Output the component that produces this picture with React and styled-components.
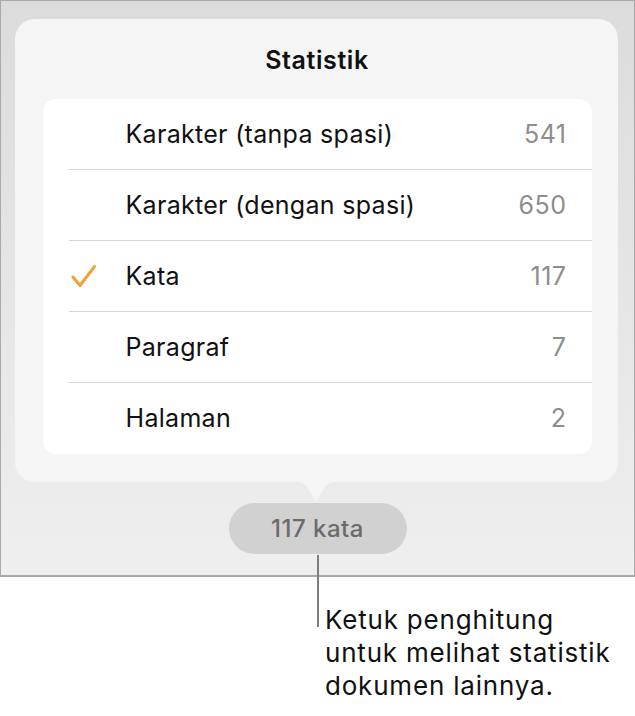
import React from 'react';
import styled, { createGlobalStyle } from 'styled-components';

const GlobalStyle = createGlobalStyle`
  body {
    margin: 0;
    background: #ffffff;
    font-family: Inter, "Noto Sans", sans-serif;
    -webkit-font-smoothing: antialiased;
  }
`;

const rows = [
  { label: 'Karakter (tanpa spasi)', value: '541' },
  { label: 'Karakter (dengan spasi)', value: '650' },
  { label: 'Kata', value: '117', checked: true },
  { label: 'Paragraf', value: '7' },
  { label: 'Halaman', value: '2' },
];

export default function App() {
  return (
    <Page>
      <GlobalStyle />
      <Screen>
        <Popover>
          <Title>Statistik</Title>
          <List>
            {rows.map((row, i) => (
              <Row key={row.label} last={i === rows.length - 1}>
                <CheckCell>
                  {row.checked && (
                    <svg width="26" height="24" viewBox="0 0 26 24">
                      <path
                        d="M2 13 L9 21.5 L23.5 2.5"
                        fill="none"
                        stroke="#f3a03a"
                        strokeWidth="3"
                        strokeLinecap="round"
                        strokeLinejoin="round"
                      />
                    </svg>
                  )}
                </CheckCell>
                <Label>{row.label}</Label>
                <Value>{row.value}</Value>
              </Row>
            ))}
          </List>
          <Arrow width="48" height="21" viewBox="0 0 48 21">
            <path
              d="M0 0 C8 0 12 2 16 7 L22.5 19 Q24 21.5 25.5 19 L32 7 C36 2 40 0 48 0 Z"
              fill="#f5f5f5"
            />
          </Arrow>
        </Popover>
        <Counter>117 kata</Counter>
      </Screen>
      <Leader />
      <Callout>
        Ketuk penghitung
        <br />
        untuk melihat statistik
        <br />
        dokumen lainnya.
      </Callout>
    </Page>
  );
}

const Page = styled.div`
  position: relative;
  width: 635px;
  height: 716px;
  overflow: hidden;
`;

const Screen = styled.div`
  box-sizing: border-box;
  width: 635px;
  height: 577px;
  border: 1.5px solid #a9a9a9;
  border-bottom-width: 2px;
  background: linear-gradient(180deg, #dcdcdc 0%, #e6e6e6 55%, #efefef 100%);
  display: flex;
  flex-direction: column;
  align-items: center;
  padding-top: 17.5px;
`;

const Popover = styled.div`
  position: relative;
  box-sizing: border-box;
  width: 603px;
  height: 463px;
  margin-right: 3px;
  background: #f5f5f5;
  border-radius: 20px;
  padding: 0 26px 0 28px;
  display: flex;
  flex-direction: column;
`;

const Title = styled.div`
  height: 80px;
  display: flex;
  align-items: center;
  justify-content: center;
  padding-top: 2px;
  box-sizing: border-box;
  font-size: 25px;
  font-weight: 600;
  color: #111;
  letter-spacing: 0.6px;
`;

const List = styled.div`
  background: #ffffff;
  border-radius: 13px;
  display: flex;
  flex-direction: column;
`;

const Row = styled.div`
  position: relative;
  height: 71px;
  display: flex;
  align-items: center;
  padding-right: 25px;

  &::after {
    content: '';
    display: ${(p) => (p.last ? 'none' : 'block')};
    position: absolute;
    left: 26px;
    right: 0;
    bottom: 0;
    height: 1px;
    background: #d6d6d6;
  }
`;

const CheckCell = styled.div`
  width: 83px;
  padding-left: 28px;
  box-sizing: border-box;
  display: flex;
  align-items: center;
`;

const Label = styled.div`
  flex: 1;
  font-size: 25px;
  letter-spacing: 0.3px;
  color: #111;
`;

const Value = styled.div`
  font-size: 25px;
  letter-spacing: 0.5px;
  color: #8d8d8d;
`;

const Arrow = styled.svg`
  position: absolute;
  left: 50%;
  bottom: -20px;
  transform: translateX(-50%);
  display: block;
`;

const Counter = styled.div`
  margin-top: 21px;
  width: 178px;
  height: 51px;
  border-radius: 26px;
  background: #d1d1d1;
  display: flex;
  align-items: center;
  justify-content: center;
  font-size: 24px;
  letter-spacing: 0.5px;
  font-weight: 500;
  color: #6b6b6b;
`;

const Leader = styled.div`
  position: absolute;
  left: 317px;
  top: 555px;
  width: 2px;
  height: 72px;
  background: #7d7d7d;
`;

const Callout = styled.div`
  padding: 26px 0 0 325px;
  font-size: 26px;
  line-height: 33px;
  letter-spacing: 0.8px;
  color: #111;
`;
